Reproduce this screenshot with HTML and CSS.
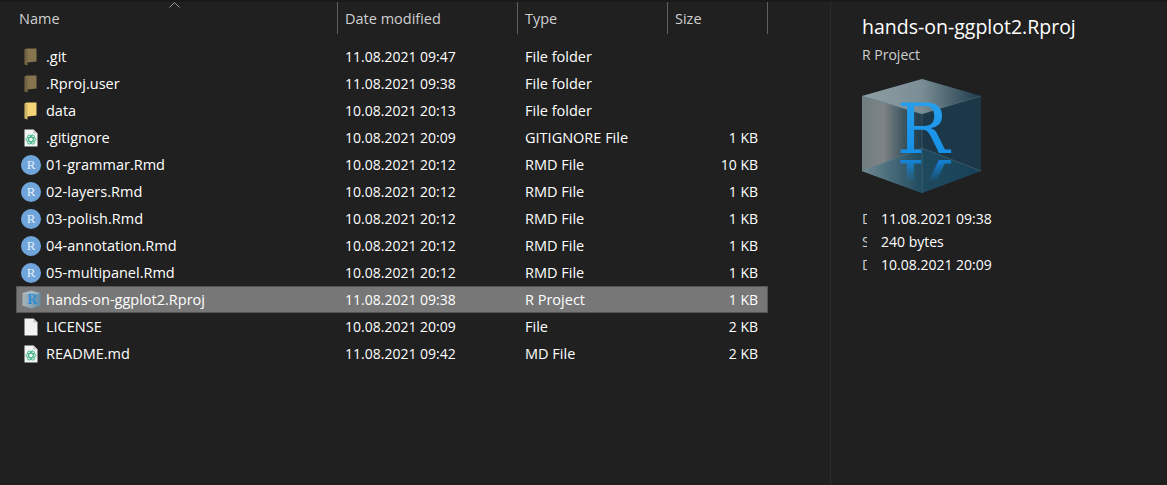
FILE: index.html
```html
<!DOCTYPE html>
<html lang="en">
<head>
<meta charset="utf-8">
<title>hands-on-ggplot2</title>
<link rel="stylesheet" href="styles.css">
</head>
<body>
<svg class="defs" width="0" height="0" aria-hidden="true">
  <defs>
    <linearGradient id="cubeLeft" x1="0" x2="1" y1="0" y2="0">
      <stop offset="0" stop-color="#6f7c80"/>
      <stop offset="0.35" stop-color="#7f8486"/>
      <stop offset="0.7" stop-color="#3d5560"/>
      <stop offset="1" stop-color="#1f3b4a"/>
    </linearGradient>
    <linearGradient id="cubeTop" x1="0" x2="1" y1="0" y2="0">
      <stop offset="0" stop-color="#8f9ea3"/>
      <stop offset="0.5" stop-color="#7b8e95"/>
      <stop offset="1" stop-color="#1d3a4a"/>
    </linearGradient>
    <linearGradient id="cubeFloor" x1="0" x2="1" y1="0" y2="0">
      <stop offset="0" stop-color="#6f8a92"/>
      <stop offset="0.5" stop-color="#1f4a5e"/>
      <stop offset="1" stop-color="#174058"/>
    </linearGradient>
    <linearGradient id="rFill" x1="0" x2="0" y1="0" y2="1">
      <stop offset="0" stop-color="#2aa4ee"/>
      <stop offset="1" stop-color="#118ae6"/>
    </linearGradient>
    <linearGradient id="rMirror" gradientUnits="userSpaceOnUse" x1="0" x2="0" y1="-82" y2="-104">
      <stop offset="0" stop-color="#118ae6" stop-opacity=".9"/>
      <stop offset="1" stop-color="#118ae6" stop-opacity="0"/>
    </linearGradient>
    <linearGradient id="miniFace" x1="0" x2="1" y1="0" y2="0">
      <stop offset="0" stop-color="#a9b5ba"/>
      <stop offset="0.5" stop-color="#8ba3b2"/>
      <stop offset="1" stop-color="#5f8cab"/>
    </linearGradient>
    <symbol id="cube" viewBox="0 0 120 116">
      <path d="M60 1 119 18V93L60 115 0 93V18Z" fill="#1c3748"/>
      <path d="M0 18 60 36V115L0 93Z" fill="url(#cubeLeft)"/>
      <path d="M60 1 119 18 60 36 0 18Z" fill="url(#cubeTop)"/>
      <path d="M0 93 60 70 119 93 60 115Z" fill="url(#cubeFloor)"/>
      <path d="M60 1V115M0 18 60 36 119 18M0 93 60 70 119 93" fill="none" stroke="#6d8b98" stroke-opacity=".35"/>
      <text class="cube-r" x="61" y="75" text-anchor="middle" fill="url(#rFill)">R</text>
      <text class="cube-r" x="61" y="-82" text-anchor="middle" transform="scale(1 -1)" fill="url(#rMirror)">R</text>
    </symbol>
    <symbol id="cube-mini" viewBox="0 0 19 19">
      <path d="M9.500.500 18.500 3V15.500L9.500 18.500 .5 15.500V3Z" fill="url(#miniFace)"/>
      <path d="M9.500.500 18.500 3 9.500 6 .5 3Z" fill="#b7c3c9" fill-opacity=".6"/>
      <text class="mini-r" x="10" y="13.500" text-anchor="middle" fill="#2f8fd6">R</text>
    </symbol>
    <symbol id="folder" viewBox="0 0 14 18">
      <path d="M.5 1.500 3 .5H12.500V13.500L3.500 14.500V17.500L.5 16.500Z" fill="currentColor"/>
      <path d="M.5 1.500 3.500 2.500V17.500L.5 16.500Z" fill="#000" fill-opacity=".14"/>
    </symbol>
    <symbol id="page" viewBox="0 0 14 18">
      <path d="M.5.500H9.500L13.500 4.500V17.500H.5Z" fill="#f3f3f3"/>
      <path d="M9.500.500 13.500 4.500H9.500Z" fill="#c8c8c8"/>
    </symbol>
    <symbol id="atom" viewBox="0 0 14 18">
      <path d="M.5.500H9.500L13.500 4.500V17.500H.5Z" fill="#f3f3f3"/>
      <path d="M9.500.500 13.500 4.500H9.500Z" fill="#c8c8c8"/>
      <g fill="none" stroke="#45b98c" stroke-width="1">
        <ellipse cx="7" cy="10.500" rx="5" ry="2.200"/>
        <ellipse cx="7" cy="10.500" rx="5" ry="2.200" transform="rotate(60 7 10.500)"/>
        <ellipse cx="7" cy="10.500" rx="5" ry="2.200" transform="rotate(120 7 10.500)"/>
      </g>
    </symbol>
    <symbol id="rmd" viewBox="0 0 20 20">
      <circle cx="10" cy="10" r="10" fill="#6fa5da"/>
      <text class="rmd-r" x="10" y="14" text-anchor="middle" fill="#e6eff8">R</text>
    </symbol>
  </defs>
</svg>

<div class="window">
  <main class="files">
    <div class="header">
      <div class="col">Name</div>
      <div class="col">Date modified</div>
      <div class="col">Type</div>
      <div class="col">Size</div>
      <svg class="sort" viewBox="0 0 11 6" width="11" height="6"><path d="M.5 5.500 5.500.5 10.500 5.500" fill="none" stroke="#9a9a9a"/></svg>
    </div>
    <div class="rows">
      <div class="row"><div class="name"><svg class="ico hidden-folder"><use href="#folder"/></svg><span>.git</span></div><div class="cell date">11.08.2021 09:47</div><div class="cell">File folder</div><div class="size"></div></div>
      <div class="row"><div class="name"><svg class="ico hidden-folder"><use href="#folder"/></svg><span>.Rproj.user</span></div><div class="cell date">11.08.2021 09:38</div><div class="cell">File folder</div><div class="size"></div></div>
      <div class="row"><div class="name"><svg class="ico open-folder"><use href="#folder"/></svg><span>data</span></div><div class="cell date">10.08.2021 20:13</div><div class="cell">File folder</div><div class="size"></div></div>
      <div class="row"><div class="name"><svg class="ico"><use href="#atom"/></svg><span>.gitignore</span></div><div class="cell date">10.08.2021 20:09</div><div class="cell">GITIGNORE File</div><div class="size">1 KB</div></div>
      <div class="row"><div class="name"><svg class="ico-round"><use href="#rmd"/></svg><span>01-grammar.Rmd</span></div><div class="cell date">10.08.2021 20:12</div><div class="cell">RMD File</div><div class="size">10 KB</div></div>
      <div class="row"><div class="name"><svg class="ico-round"><use href="#rmd"/></svg><span>02-layers.Rmd</span></div><div class="cell date">10.08.2021 20:12</div><div class="cell">RMD File</div><div class="size">1 KB</div></div>
      <div class="row"><div class="name"><svg class="ico-round"><use href="#rmd"/></svg><span>03-polish.Rmd</span></div><div class="cell date">10.08.2021 20:12</div><div class="cell">RMD File</div><div class="size">1 KB</div></div>
      <div class="row"><div class="name"><svg class="ico-round"><use href="#rmd"/></svg><span>04-annotation.Rmd</span></div><div class="cell date">10.08.2021 20:12</div><div class="cell">RMD File</div><div class="size">1 KB</div></div>
      <div class="row"><div class="name"><svg class="ico-round"><use href="#rmd"/></svg><span>05-multipanel.Rmd</span></div><div class="cell date">10.08.2021 20:12</div><div class="cell">RMD File</div><div class="size">1 KB</div></div>
      <div class="row selected"><div class="name"><svg class="ico-cube"><use href="#cube-mini"/></svg><span>hands-on-ggplot2.Rproj</span></div><div class="cell date">11.08.2021 09:38</div><div class="cell">R Project</div><div class="size">1 KB</div></div>
      <div class="row"><div class="name"><svg class="ico"><use href="#page"/></svg><span>LICENSE</span></div><div class="cell date">10.08.2021 20:09</div><div class="cell">File</div><div class="size">2 KB</div></div>
      <div class="row"><div class="name"><svg class="ico"><use href="#atom"/></svg><span>README.md</span></div><div class="cell date">11.08.2021 09:42</div><div class="cell">MD File</div><div class="size">2 KB</div></div>
    </div>
  </main>
  <aside class="details">
    <h1 class="title">hands-on-ggplot2.Rproj</h1>
    <p class="kind">R Project</p>
    <svg class="preview"><use href="#cube"/></svg>
    <dl class="props">
      <div class="prop"><dt>Date modified:</dt><dd>11.08.2021 09:38</dd></div>
      <div class="prop"><dt>Size:</dt><dd>240 bytes</dd></div>
      <div class="prop"><dt>Date created:</dt><dd>10.08.2021 20:09</dd></div>
    </dl>
  </aside>
</div>
</body>
</html>
```

FILE: styles.css
```css
* { box-sizing: border-box; }
html, body { margin: 0; height: 100%; }
body {
  background: #202020;
  color: #fff;
  font-family: "Open Sans", "Noto Sans", sans-serif;
  font-size: 14.5px;
  overflow: hidden;
}
.defs { display: block; height: 0; }
.window {
  display: flex;
  height: 485px;
  border-top: 2px solid #191919;
}
.files { width: 830px; flex: none; padding-left: 16px; }
.header, .row {
  display: grid;
  grid-template-columns: 322px 180px 150px 100px;
  width: 752px;
}
.header { position: relative; height: 32px; color: #cfcfcf; }
.col {
  display: flex;
  align-items: center;
  padding: 0 0 0 7px;
  border-right: 1px solid #5e5e5e;
}
.col:first-child { padding-left: 3px; }
.sort { position: absolute; left: 153px; top: 0; }
.rows { margin-top: 9px; }
.row { height: 27px; align-items: center; }
.row.selected { background: #777; box-shadow: inset 0 0 0 1px #565656; }
.name { display: flex; align-items: center; min-width: 0; height: 25px; }
.cell { padding-left: 7px; }
.date { font-size: 14px; }
.size { text-align: right; padding-right: 10px; font-size: 14px; }
.ico { width: 14px; height: 18px; margin: 0 8px; flex: none; }
.ico-round { width: 20px; height: 20px; margin: 0 5px; flex: none; }
.ico-cube { width: 19px; height: 19px; margin: 0 5px 0 6px; flex: none; }
.hidden-folder { color: #85744e; }
.open-folder { color: #f5d478; }
.rmd-r { font: 400 13px "Liberation Serif", serif; }
.mini-r { font: 700 12px "DejaVu Serif", serif; }
.cube-r { font: 400 70px "DejaVu Serif", serif; }
.details {
  flex: 1;
  border-left: 1px solid #2b2b2b;
  padding: 12px 0 0 31px;
  min-width: 0;
}
.title { margin: 0; font-size: 19.5px; font-weight: 400; line-height: 26px; }
.kind { margin: 4px 0 0; font-size: 14px; line-height: 22px; color: #d0d0d0; }
.preview { display: block; width: 120px; height: 116px; margin: 12px 0 0; }
.props { margin: 13px 0 0; font-size: 14px; }
.prop { display: flex; height: 23px; align-items: center; }
.prop dt { width: 5px; overflow: hidden; white-space: nowrap; color: #d0d0d0; flex: none; margin-right: 14px; }
.prop dd { margin: 0; }
```
